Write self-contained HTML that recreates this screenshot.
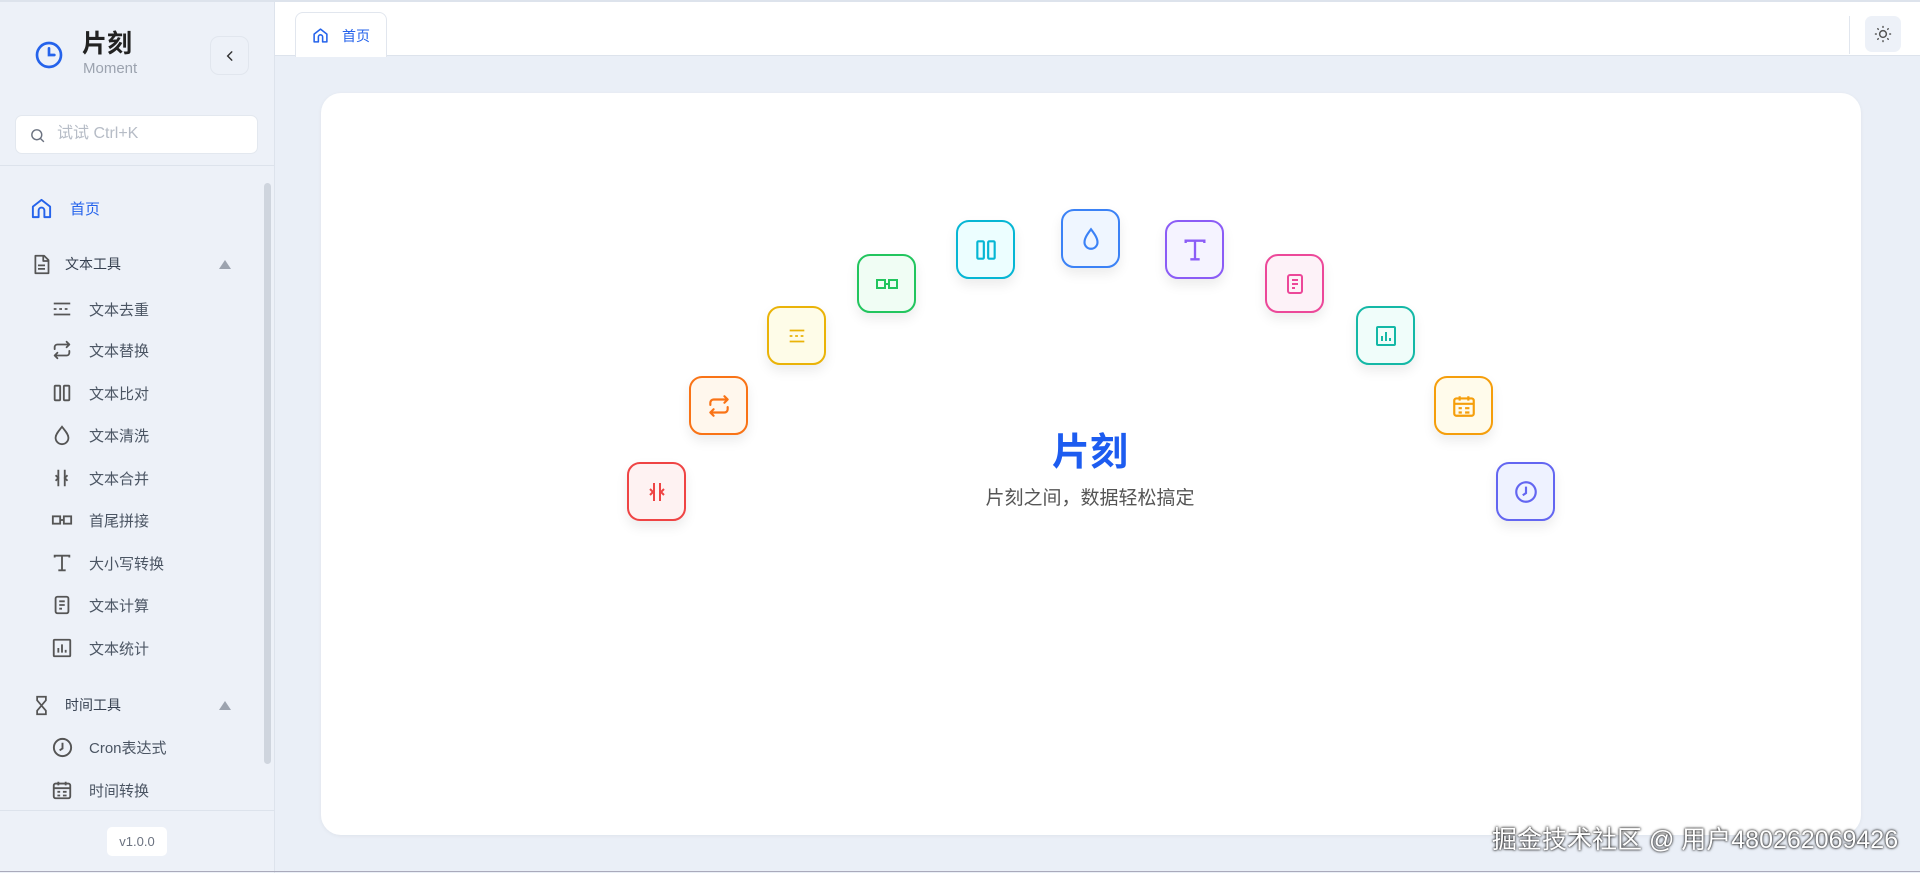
<!DOCTYPE html>
<html><head><meta charset="utf-8"><style>
*{box-sizing:border-box;margin:0;padding:0}
body{width:1920px;height:873px;overflow:hidden;background:#eaeff7;font-family:"Liberation Sans","Noto Sans CJK SC",sans-serif;position:relative}
.side{position:absolute;left:0;top:0;width:275px;height:873px;background:#edf1f8;border-right:1px solid #dde3ec;border-top:2px solid #dde3ec}
.abs{position:absolute}
svg{display:block}
.mi{position:absolute;left:0;width:260px;height:30px;display:flex;align-items:center;font-size:15px;color:#4b5563}
.mi svg{position:absolute;left:51px}
.mi span{position:absolute;left:89px}
.sec span{left:65px;font-size:14px;color:#374151}
.sec svg{left:31px}
.tri{position:absolute;left:219px;width:0;height:0;border-left:6px solid transparent;border-right:6px solid transparent;border-bottom:9px solid #9ca3af}
.ib{position:absolute;width:59px;height:59px;border-radius:13px;border:2px solid;display:flex;align-items:center;justify-content:center;box-shadow:0 6px 12px rgba(0,0,0,.08)}
</style></head><body>
<div class="side">
  <svg class="abs" style="left:33px;top:37px" width="32" height="32" viewBox="0 0 24 24" fill="none" stroke="#2563eb" stroke-width="2" stroke-linecap="round"><circle cx="12" cy="12" r="9"/><path d="M12 7v5h4"/></svg>
  <div class="abs" style="left:82px;top:27px;font-size:25px;font-weight:bold;color:#222;line-height:30px">片刻</div>
  <div class="abs" style="left:83px;top:58px;font-size:15px;color:#9ca3af;line-height:18px">Moment</div>
  <div class="abs" style="left:210px;top:34px;width:39px;height:39px;border:1px solid #e1e6ee;border-radius:9px;background:#edf1f8"><svg style="margin:12px" width="14" height="14" viewBox="0 0 24 24" fill="none" stroke="#333" stroke-width="2.5" stroke-linecap="round"><path d="M15 5l-7 7 7 7"/></svg></div>
  <div class="abs" style="left:15px;top:113px;width:243px;height:39px;background:#fff;border:1px solid #e3e8ef;border-radius:7px">
    <svg class="abs" style="left:13px;top:11px" width="17" height="17" viewBox="0 0 24 24" fill="none" stroke="#6b7280" stroke-width="2"><circle cx="11" cy="11" r="7"/><path d="M16 16l5 5"/></svg>
    <div class="abs" style="left:41px;top:9px;font-size:16px;color:#b6bcc6;line-height:18px">试试 Ctrl+K</div>
  </div>
  <div class="abs" style="left:0;top:163px;width:274px;border-top:1px solid #dde3ec"></div>
  <div class="abs" style="left:264px;top:181px;width:7px;height:581px;background:#cfd5de;border-radius:4px"></div>
  <div class="mi" style="top:191px"><svg style="left:30px" width="23" height="23" viewBox="0 0 24 24" fill="none" stroke="#2563eb" stroke-width="2" stroke-linejoin="round"><path d="M3 10l9-7 9 7v11H15v-7a3 3 0 00-6 0v7H3z"/></svg><span style="left:70px;color:#2563eb;font-size:15px">首页</span></div>
  <div class="mi sec" style="top:247px"><svg width="21" height="23" viewBox="0 0 24 24" fill="none" stroke="#555" stroke-width="2" stroke-linejoin="round"><path d="M5 2h10l5 5v15H5z M14 2v6h6 M8 13h8 M8 17h8"/></svg><span>文本工具</span><i class="tri" style="top:11px"></i></div>
  <div class="mi" style="top:292px"><svg width="22" height="22" viewBox="0 0 24 24" fill="none" stroke="#555" stroke-width="2"><path d="M3 6h18M3 12h3M9 12h3M15 12h3M3 18h18"/></svg><span>文本去重</span></div>
  <div class="mi" style="top:333px"><svg width="22" height="22" viewBox="0 0 24 24" fill="none" stroke="#555" stroke-width="2" stroke-linecap="round" stroke-linejoin="round"><path d="M4 11V9a3 3 0 013-3h13l-3-3M20 6l-3 3M20 13v2a3 3 0 01-3 3H4l3 3M4 18l3-3"/></svg><span>文本替换</span></div>
  <div class="mi" style="top:376px"><svg width="22" height="22" viewBox="0 0 24 24" fill="none" stroke="#555" stroke-width="2"><rect x="4" y="4" width="6" height="16" rx="1"/><rect x="14" y="4" width="6" height="16" rx="1"/></svg><span>文本比对</span></div>
  <div class="mi" style="top:418px"><svg width="22" height="22" viewBox="0 0 24 24" fill="none" stroke="#555" stroke-width="2"><path d="M12 3C9 7 5 11 5 15a7 7 0 0014 0c0-4-4-8-7-12z"/></svg><span>文本清洗</span></div>
  <div class="mi" style="top:461px"><svg width="22" height="22" viewBox="0 0 24 24" fill="none" stroke="#555" stroke-width="2"><path d="M8 3v18M15 3v18M5 9l3 3-3 3M18 9l-3 3 3 3"/></svg><span>文本合并</span></div>
  <div class="mi" style="top:503px"><svg width="22" height="22" viewBox="0 0 24 24" fill="none" stroke="#555" stroke-width="2"><rect x="2" y="8" width="8" height="8"/><rect x="14" y="8" width="8" height="8"/><path d="M10 12h4"/></svg><span>首尾拼接</span></div>
  <div class="mi" style="top:546px"><svg width="22" height="22" viewBox="0 0 24 24" fill="none" stroke="#555" stroke-width="2"><path d="M4 6V4h16v2M12 4v16M8 20h8"/></svg><span>大小写转换</span></div>
  <div class="mi" style="top:588px"><svg width="22" height="22" viewBox="0 0 24 24" fill="none" stroke="#555" stroke-width="2"><rect x="5" y="3" width="14" height="18" rx="2"/><path d="M9 8h6M9 12h6M9 16h3"/></svg><span>文本计算</span></div>
  <div class="mi" style="top:631px"><svg width="22" height="22" viewBox="0 0 24 24" fill="none" stroke="#555" stroke-width="2"><rect x="3" y="3" width="18" height="18" rx="1"/><path d="M8 17v-5M12 17V8M16 17v-3"/></svg><span>文本统计</span></div>
  <div class="mi sec" style="top:688px"><svg width="21" height="23" viewBox="0 0 24 24" fill="none" stroke="#555" stroke-width="2"><path d="M6 2h12M6 22h12M7 2v4l5 6-5 6v4M17 2v4l-5 6 5 6v4"/></svg><span>时间工具</span><i class="tri" style="top:11px"></i></div>
  <div class="mi" style="top:730px"><svg width="23" height="23" viewBox="0 0 24 24" fill="none" stroke="#555" stroke-width="2"><circle cx="12" cy="12" r="9"/><path d="M12 7v6l-3 2" /></svg><span>Cron表达式</span></div>
  <div class="mi" style="top:773px"><svg width="22" height="22" viewBox="0 0 24 24" fill="none" stroke="#555" stroke-width="2"><rect x="3" y="5" width="18" height="16" rx="2"/><path d="M3 10h18M8 3v4M16 3v4M7 14h3M13 14h4M7 18h3M13 18h4"/></svg><span>时间转换</span></div>
  <div class="abs" style="left:0;top:808px;width:274px;border-top:1px solid #dde3ec"></div>
  <div class="abs" style="left:107px;top:825px;width:60px;height:29px;background:#fff;border-radius:5px;font-size:13px;color:#6b7280;text-align:center;line-height:29px">v1.0.0</div>
</div>
<div class="abs" style="left:275px;top:0;width:1645px;height:56px;background:#fff;border-top:2px solid #dde3ec;border-bottom:1px solid #dde3ec">
  <div class="abs" style="left:20px;top:10px;width:92px;height:45px;border:1px solid #e1e6ee;border-bottom:none;border-radius:8px 8px 0 0;background:#fff">
    <svg class="abs" style="left:16px;top:14px" width="17" height="17" viewBox="0 0 24 24" fill="none" stroke="#2563eb" stroke-width="2.2" stroke-linejoin="round"><path d="M3 10l9-7 9 7v11H15v-7a3 3 0 00-6 0v7H3z"/></svg>
    <div class="abs" style="left:46px;top:13px;font-size:14px;color:#2563eb">首页</div>
  </div>
  <div class="abs" style="left:1574px;top:14px;height:38px;border-left:1px solid #e1e6ee"></div>
  <div class="abs" style="left:1590px;top:14px;width:36px;height:36px;background:#edf1f8;border-radius:7px"><svg style="margin:9px" width="18" height="18" viewBox="0 0 24 24" fill="none" stroke="#555" stroke-width="2" stroke-linecap="round"><circle cx="12" cy="12" r="4.5"/><path d="M12 2v1M12 21v1M2 12h1M21 12h1M5 5l.7.7M18.3 18.3l.7.7M5 19l.7-.7M18.3 5.7l.7-.7"/></svg></div>
</div>
<div class="abs" style="left:321px;top:93px;width:1540px;height:742px;background:#fff;border-radius:20px;box-shadow:0 1px 4px rgba(0,0,0,.05)"></div>
<div class="abs" style="left:890px;top:421px;width:400px;text-align:center;font-size:38px;font-weight:bold;color:#1d5cf0">片刻</div>
<div class="abs" style="left:890px;top:483px;width:400px;text-align:center;font-size:19px;color:#555">片刻之间，数据轻松搞定</div>

<div class="ib" style="left:627px;top:462px;border-color:#ef4444;background:#fef2f2"><svg width="24" height="24" viewBox="0 0 24 24" fill="none" stroke="#ef4444" stroke-width="2"><path d="M9 3v18M15 3v18M5 9l3 3-3 3M19 9l-3 3 3 3"/></svg></div>
<div class="ib" style="left:689px;top:376px;border-color:#f97316;background:#fff7ed"><svg width="26" height="26" viewBox="0 0 24 24" fill="none" stroke="#f97316" stroke-width="2" stroke-linecap="round" stroke-linejoin="round"><path d="M4 11V9a3 3 0 013-3h13l-3-3M20 6l-3 3M20 13v2a3 3 0 01-3 3H4l3 3M4 18l3-3"/></svg></div>
<div class="ib" style="left:767px;top:306px;border-color:#eab308;background:#fefce8"><svg width="22" height="22" viewBox="0 0 24 24" fill="none" stroke="#eab308" stroke-width="2"><path d="M4 6h16M4 12h3M10 12h3M16 12h3M4 18h16"/></svg></div>
<div class="ib" style="left:857px;top:254px;border-color:#22c55e;background:#f0fdf4"><svg width="24" height="24" viewBox="0 0 24 24" fill="none" stroke="#22c55e" stroke-width="2"><rect x="2" y="8" width="8" height="8"/><rect x="14" y="8" width="8" height="8"/><path d="M10 12h4"/></svg></div>
<div class="ib" style="left:956px;top:220px;border-color:#06b6d4;background:#ecfeff"><svg width="26" height="26" viewBox="0 0 24 24" fill="none" stroke="#06b6d4" stroke-width="2"><rect x="4" y="4" width="6" height="16" rx="1"/><rect x="14" y="4" width="6" height="16" rx="1"/></svg></div>
<div class="ib" style="left:1061px;top:209px;border-color:#3b82f6;background:#eff6ff"><svg width="26" height="26" viewBox="0 0 24 24" fill="none" stroke="#3b82f6" stroke-width="2"><path d="M12 3C9 7 6 11 6 15a6 6 0 0012 0c0-4-3-8-6-12z"/></svg></div>
<div class="ib" style="left:1165px;top:220px;border-color:#8b5cf6;background:#f5f3ff"><svg width="28" height="28" viewBox="0 0 24 24" fill="none" stroke="#8b5cf6" stroke-width="2"><path d="M4 6V4h16v2M12 4v16M8 20h8"/></svg></div>
<div class="ib" style="left:1265px;top:254px;border-color:#ec4899;background:#fdf2f8"><svg width="24" height="24" viewBox="0 0 24 24" fill="none" stroke="#ec4899" stroke-width="2"><rect x="5" y="3" width="14" height="18" rx="2"/><path d="M9 8h6M9 12h6M9 16h3"/></svg></div>
<div class="ib" style="left:1356px;top:306px;border-color:#14b8a6;background:#f0fdfa"><svg width="24" height="24" viewBox="0 0 24 24" fill="none" stroke="#14b8a6" stroke-width="2"><rect x="3" y="3" width="18" height="18" rx="1"/><path d="M8 17v-5M12 17V8M16 17v-3"/></svg></div>
<div class="ib" style="left:1434px;top:376px;border-color:#f59e0b;background:#fffbeb"><svg width="26" height="26" viewBox="0 0 24 24" fill="none" stroke="#f59e0b" stroke-width="2"><rect x="3" y="5" width="18" height="16" rx="2"/><path d="M3 10h18M8 3v4M16 3v4M7 14h3M13 14h4M7 18h3M13 18h4"/></svg></div>
<div class="ib" style="left:1496px;top:462px;border-color:#6366f1;background:#eef2ff"><svg width="26" height="26" viewBox="0 0 24 24" fill="none" stroke="#6366f1" stroke-width="2"><circle cx="12" cy="12" r="9"/><path d="M12 7v6l-3 2"/></svg></div>

<div class="abs" style="left:1492px;top:820px;font-size:25px;color:#fff;text-shadow:0 0 2px #000,0 0 3px rgba(0,0,0,.6);white-space:nowrap">掘金技术社区 @ 用户480262069426</div>
<div class="abs" style="left:0;top:871px;width:1920px;border-top:1px solid #aab"></div>
</body></html>
